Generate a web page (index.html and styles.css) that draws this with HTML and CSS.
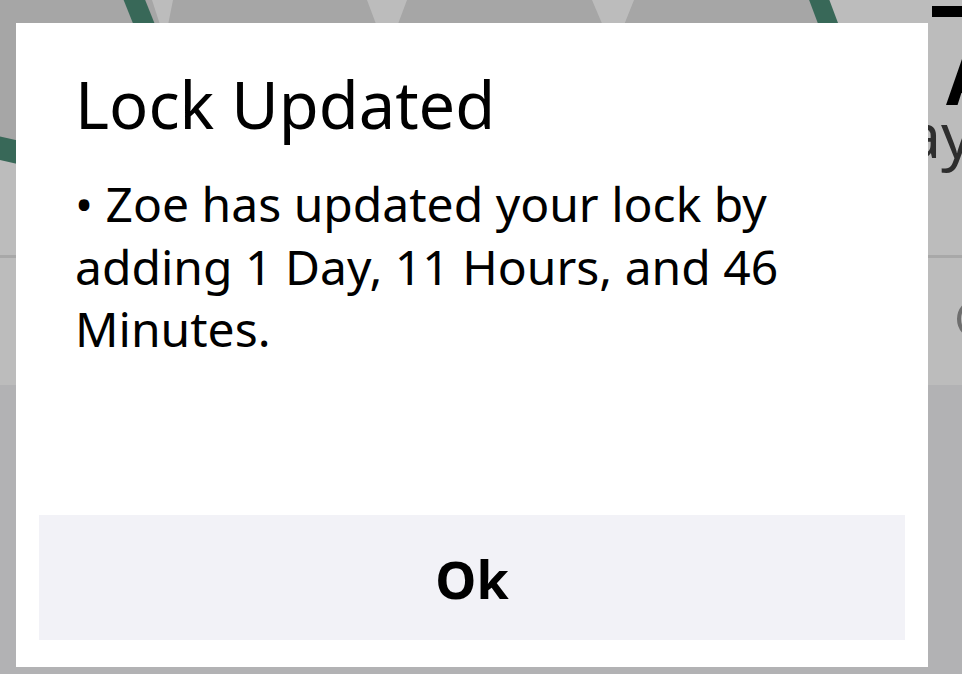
FILE: index.html
```html
<!DOCTYPE html>
<html lang="en">
<head>
<meta charset="utf-8">
<title>Lock Updated</title>
<link rel="stylesheet" href="styles.css">
</head>
<body>
<div class="screen">
  <header class="header">
    <svg class="header-art" width="962" height="255" viewBox="0 0 962 255" aria-hidden="true">
      <rect x="0" y="0" width="962" height="255" fill="#bcbcbc"/>
      <polygon points="0,0 822,0 845,60 845,140 16,140 0,146" fill="#a6a6a6"/>
      <polygon points="152,0 173,0 165,40" fill="#bcbcbc"/>
      <polygon points="367,0 407,0 392,40 382,40" fill="#bcbcbc"/>
      <polygon points="592,0 634,0 618,40 609,40" fill="#bcbcbc"/>
      <path d="M132,-6 L148,34" stroke="#386858" stroke-width="20" fill="none"/>
      <path d="M-6,147 L30,155" stroke="#386858" stroke-width="23" fill="none"/>
      <path d="M817,-6 L832,34" stroke="#386858" stroke-width="19" fill="none"/>
    </svg>
    <div class="header-text">
      <div class="hdr-bar"></div>
      <div class="hdr-big">A</div>
      <div class="hdr-sub">Days</div>
    </div>
  </header>
  <div class="divider"></div>
  <div class="row">
    <div class="row-icon"></div>
  </div>
  <div class="rest"></div>
</div>

<div class="modal" role="dialog" aria-labelledby="dlg-title">
  <h1 class="modal-title" id="dlg-title">Lock Updated</h1>
  <p class="modal-body">• Zoe has updated your lock by adding 1 Day, 11 Hours, and 46 Minutes.</p>
  <button class="modal-btn" type="button">Ok</button>
</div>
</body>
</html>
```

FILE: styles.css
```css
html, body {
  margin: 0;
  padding: 0;
  width: 962px;
  height: 674px;
  overflow: hidden;
  background: #b2b2b4;
  font-family: "Noto Sans", "Open Sans", "DejaVu Sans", sans-serif;
}

.screen {
  display: flex;
  flex-direction: column;
  width: 962px;
  height: 674px;
}

.header {
  display: grid;
  height: 255px;
  overflow: hidden;
}

.header-art,
.header-text {
  grid-area: 1 / 1;
}

.header-art {
  display: block;
}

.header-text {
  display: flex;
  flex-direction: column;
  padding-top: 6px;
}

.hdr-bar {
  margin-left: 932px;
  width: 40px;
  height: 11px;
  background: #000;
}

.hdr-big {
  margin-left: 946px;
  margin-top: 31px;
  font-size: 70px;
  font-weight: 700;
  line-height: 60px;
  color: #000;
  white-space: nowrap;
}

.hdr-sub {
  margin-left: 861px;
  margin-top: 0;
  font-size: 62px;
  line-height: 52px;
  color: #2e2e2e;
  white-space: nowrap;
}

.divider {
  height: 3px;
  background: #a8a8a8;
}

.row {
  height: 127px;
  background: #bcbcbc;
  display: flex;
  align-items: center;
  overflow: hidden;
}

.row-icon {
  margin-left: 957px;
  margin-top: -6px;
  flex: none;
  width: 34px;
  height: 34px;
  border: 4px solid #6e6e6e;
  border-radius: 50%;
}

.rest {
  flex: 1;
  background: #b2b2b4;
}

.modal {
  position: fixed;
  left: 16px;
  top: 23px;
  width: 912px;
  height: 644px;
  box-sizing: border-box;
  background: #fff;
  display: flex;
  flex-direction: column;
  padding: 41px 23px 27px;
}

.modal-title {
  margin: 0 36px;
  font-size: 65px;
  font-weight: 400;
  line-height: 80px;
  color: #000;
}

.modal-body {
  margin: 29px 36px 0;
  font-size: 48px;
  line-height: 62.5px;
  color: #000;
}

.modal-btn {
  margin-top: auto;
  height: 125px;
  border: 0;
  background: #f2f2f7;
  font-family: inherit;
  font-size: 52px;
  font-weight: 700;
  color: #000;
  padding: 0;
  padding-top: 2px;
}
```
